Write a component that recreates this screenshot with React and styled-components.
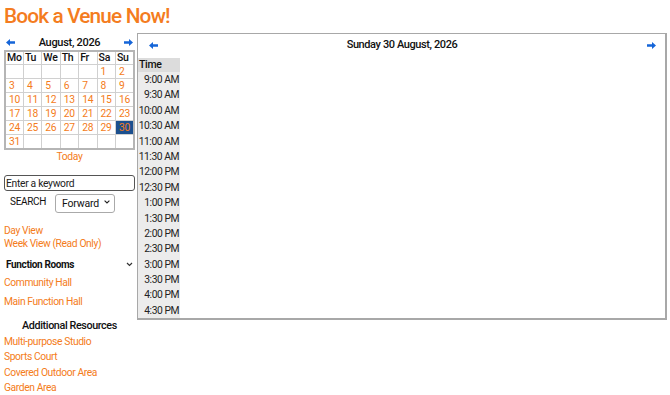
import React from "react";
import styled, { createGlobalStyle } from "styled-components";

const ORANGE = "#f47c20";
const BLUE = "#1565d8";

const Global = createGlobalStyle`
  html, body { margin: 0; padding: 0; background: #fff; }
  body { font-family: Roboto, "Liberation Sans", Arial, sans-serif; color: #111; letter-spacing: -0.3px; }
  * { box-sizing: border-box; }
`;

const Page = styled.div`
  padding: 4px 0 0 4px;
  width: 670px;
`;

const Title = styled.h1`
  margin: 0;
  font-family: Roboto, sans-serif;
  font-weight: 500;
  font-size: 20.8px;
  letter-spacing: -0.85px;
  line-height: 24px;
  color: ${ORANGE};
  height: 29px;
`;

const Columns = styled.div`
  display: flex;
  align-items: flex-start;
  gap: 2px;
`;

const Sidebar = styled.div`
  width: 131px;
  display: flex;
  flex-direction: column;
  padding-top: 2px;
`;

const CalHead = styled.div`
  display: flex;
  align-items: center;
  justify-content: space-between;
  height: 15px;
  padding: 0 1px 0 1px;
  font-size: 11px;
  font-weight: 500;
  color: #111;
`;

const ArrowBtn = styled.span`
  display: inline-flex;
  width: 10px;
  height: 8px;
  align-items: center;
  justify-content: center;
`;

const Arrow = ({ dir }) => (
  <ArrowBtn>
    <svg width="9" height="7" viewBox="0 0 9 7">
      {dir === "left" ? (
        <polygon points="0,3.5 4,0 4,2.3 9,2.3 9,4.7 4,4.7 4,7" fill={BLUE} />
      ) : (
        <polygon points="9,3.5 5,0 5,2.3 0,2.3 0,4.7 5,4.7 5,7" fill={BLUE} />
      )}
    </svg>
  </ArrowBtn>
);

const CalTable = styled.table`
  width: 131px;
  border-collapse: collapse;
  border: 2px solid #b5b5b5;
  table-layout: fixed;
`;

const Th = styled.th`
  height: 13px;
  padding: 0 0 0 1px;
  text-align: left;
  font-weight: 500;
  font-size: 10.5px;
  line-height: 12px;
  color: #111;
  border: 1px solid #d0d0d0;
`;

const Td = styled.td`
  height: 14px;
  padding: 0 0 0 3px;
  text-align: left;
  line-height: 13px;
  font-size: 10.3px;
  color: ${ORANGE};
  border: 1px solid #d0d0d0;
  background: ${(p) => (p.$selected ? "#1b4f8e" : "transparent")};
`;

const TodayLink = styled.div`
  text-align: center;
  font-size: 10.3px;
  line-height: 14px;
  color: ${ORANGE};
  height: 14px;
`;

const KeywordInput = styled.input`
  margin-top: 11px;
  width: 131px;
  height: 16px;
  border: 1px solid #555;
  border-radius: 3px;
  padding: 0 1px;
  font-family: Roboto, sans-serif;
  font-size: 10.3px;
  letter-spacing: -0.3px;
  color: #111;
  &::placeholder { color: #222; }
`;

const SearchRow = styled.div`
  display: flex;
  align-items: center;
  height: 19px;
  margin-top: 1px;
`;

const SearchLabel = styled.span`
  font-size: 10px;
  color: #111;
  padding-left: 6px;
  width: 51px;
`;

const SelectWrap = styled.span`
  position: relative;
  display: inline-block;
  width: 60px;
  height: 19px;
`;

const Select = styled.select`
  appearance: none;
  -webkit-appearance: none;
  width: 60px;
  height: 19px;
  border: 1px solid #aaa;
  border-radius: 3px;
  background: #fff;
  font-family: Roboto, sans-serif;
  font-size: 10.5px;
  letter-spacing: -0.2px;
  color: #111;
  padding: 0 0 0 6px;
`;

const SelectCaret = styled.svg`
  position: absolute;
  right: 5px;
  top: 8px;
  pointer-events: none;
`;

const ViewLinks = styled.div`
  margin-top: 13px;
  display: flex;
  flex-direction: column;
`;

const Link = styled.a`
  font-size: 10.3px;
  letter-spacing: -0.4px;
  line-height: ${(p) => p.$lh || 13}px;
  color: ${ORANGE};
  text-decoration: none;
  display: block;
  white-space: nowrap;
`;

const GroupHead = styled.div`
  margin-top: 7px;
  display: flex;
  align-items: center;
  justify-content: space-between;
  height: 14px;
  padding-left: 2px;
  font-weight: 700;
  font-size: 10px;
  letter-spacing: -0.35px;
  color: #111;
`;

const Chevron = () => (
  <svg width="7" height="5" viewBox="0 0 7 5" style={{ marginRight: 2 }}>
    <polyline points="1,1 3.5,3.5 6,1" fill="none" stroke="#333" strokeWidth="1.2" />
  </svg>
);

const RoomList = styled.div`
  margin-top: 2px;
  display: flex;
  flex-direction: column;
`;

const SubHead = styled.div`
  margin-top: 7px;
  text-align: center;
  font-size: 10.8px;
  font-weight: 500;
  letter-spacing: -0.4px;
  line-height: 16px;
  color: #111;
`;

const Panel = styled.div`
  width: 530px;
  height: 287px;
  border: 1px solid #a8a8a8;
  border-right-width: 2px;
  border-bottom-width: 2px;
  display: flex;
  flex-direction: column;
  overflow: hidden;
`;

const PanelHead = styled.div`
  height: 24px;
  flex: none;
  display: flex;
  align-items: flex-start;
  justify-content: space-between;
  padding: 4px 9px 0 10px;
  line-height: 13px;
  font-size: 11px;
  font-weight: 500;
  letter-spacing: -0.4px;
  color: #111;
  & > span:first-child, & > span:last-child { margin-top: 3px; }
`;

const TimeCol = styled.div`
  width: 42px;
  background: #ececec;
  display: flex;
  flex-direction: column;
  flex: 1;
`;

const TimeHead = styled.div`
  background: #dcdcdc;
  height: 14px;
  line-height: 14px;
  font-size: 10.5px;
  font-weight: 500;
  padding-left: 1px;
  color: #111;
`;

const TimeCell = styled.div`
  height: 15.4px;
  line-height: 15.4px;
  flex: none;
  text-align: right;
  white-space: nowrap;
  font-size: 10.3px;
  letter-spacing: -0.45px;
  color: #222;
  padding-right: 1px;
`;

const weeks = [
  ["", "", "", "", "", 1, 2],
  [3, 4, 5, 6, 7, 8, 9],
  [10, 11, 12, 13, 14, 15, 16],
  [17, 18, 19, 20, 21, 22, 23],
  [24, 25, 26, 27, 28, 29, 30],
  [31, "", "", "", "", "", ""],
];

const times = [
  "9:00 AM", "9:30 AM", "10:00 AM", "10:30 AM", "11:00 AM", "11:30 AM",
  "12:00 PM", "12:30 PM", "1:00 PM", "1:30 PM", "2:00 PM", "2:30 PM",
  "3:00 PM", "3:30 PM", "4:00 PM", "4:30 PM",
];

export default function App() {
  return (
    <Page>
      <Global />
      <Title>Book a Venue Now!</Title>
      <Columns>
        <Sidebar>
          <CalHead>
            <Arrow dir="left" />
            <span>August, 2026</span>
            <Arrow dir="right" />
          </CalHead>
          <CalTable>
            <thead>
              <tr>
                {["Mo", "Tu", "We", "Th", "Fr", "Sa", "Su"].map((d) => (
                  <Th key={d}>{d}</Th>
                ))}
              </tr>
            </thead>
            <tbody>
              {weeks.map((w, i) => (
                <tr key={i}>
                  {w.map((d, j) => (
                    <Td key={j} $selected={d === 30}>{d}</Td>
                  ))}
                </tr>
              ))}
            </tbody>
          </CalTable>
          <TodayLink>Today</TodayLink>
          <KeywordInput placeholder="Enter a keyword" />
          <SearchRow>
            <SearchLabel>SEARCH</SearchLabel>
            <SelectWrap>
              <Select defaultValue="Forward">
                <option>Forward</option>
                <option>Backward</option>
              </Select>
              <SelectCaret width="6" height="4" viewBox="0 0 6 4">
                <polyline points="0.6,0.6 3,3 5.4,0.6" fill="none" stroke="#222" strokeWidth="1.1" />
              </SelectCaret>
            </SelectWrap>
          </SearchRow>
          <ViewLinks>
            <Link href="#">Day View</Link>
            <Link href="#">Week View (Read Only)</Link>
          </ViewLinks>
          <GroupHead>
            <span>Function Rooms</span>
            <Chevron />
          </GroupHead>
          <RoomList>
            <Link href="#" $lh={19}>Community Hall</Link>
            <Link href="#" $lh={19}>Main Function Hall</Link>
          </RoomList>
          <SubHead>Additional Resources</SubHead>
          <Link href="#" $lh={15.4}>Multi-purpose Studio</Link>
          <Link href="#" $lh={15.4}>Sports Court</Link>
          <Link href="#" $lh={15.4}>Covered Outdoor Area</Link>
          <Link href="#" $lh={15.4}>Garden Area</Link>
        </Sidebar>
        <Panel>
          <PanelHead>
            <Arrow dir="left" />
            <span>Sunday 30 August, 2026</span>
            <Arrow dir="right" />
          </PanelHead>
          <TimeCol>
            <TimeHead>Time</TimeHead>
            {times.map((t) => (
              <TimeCell key={t}>{t}</TimeCell>
            ))}
          </TimeCol>
        </Panel>
      </Columns>
    </Page>
  );
}
